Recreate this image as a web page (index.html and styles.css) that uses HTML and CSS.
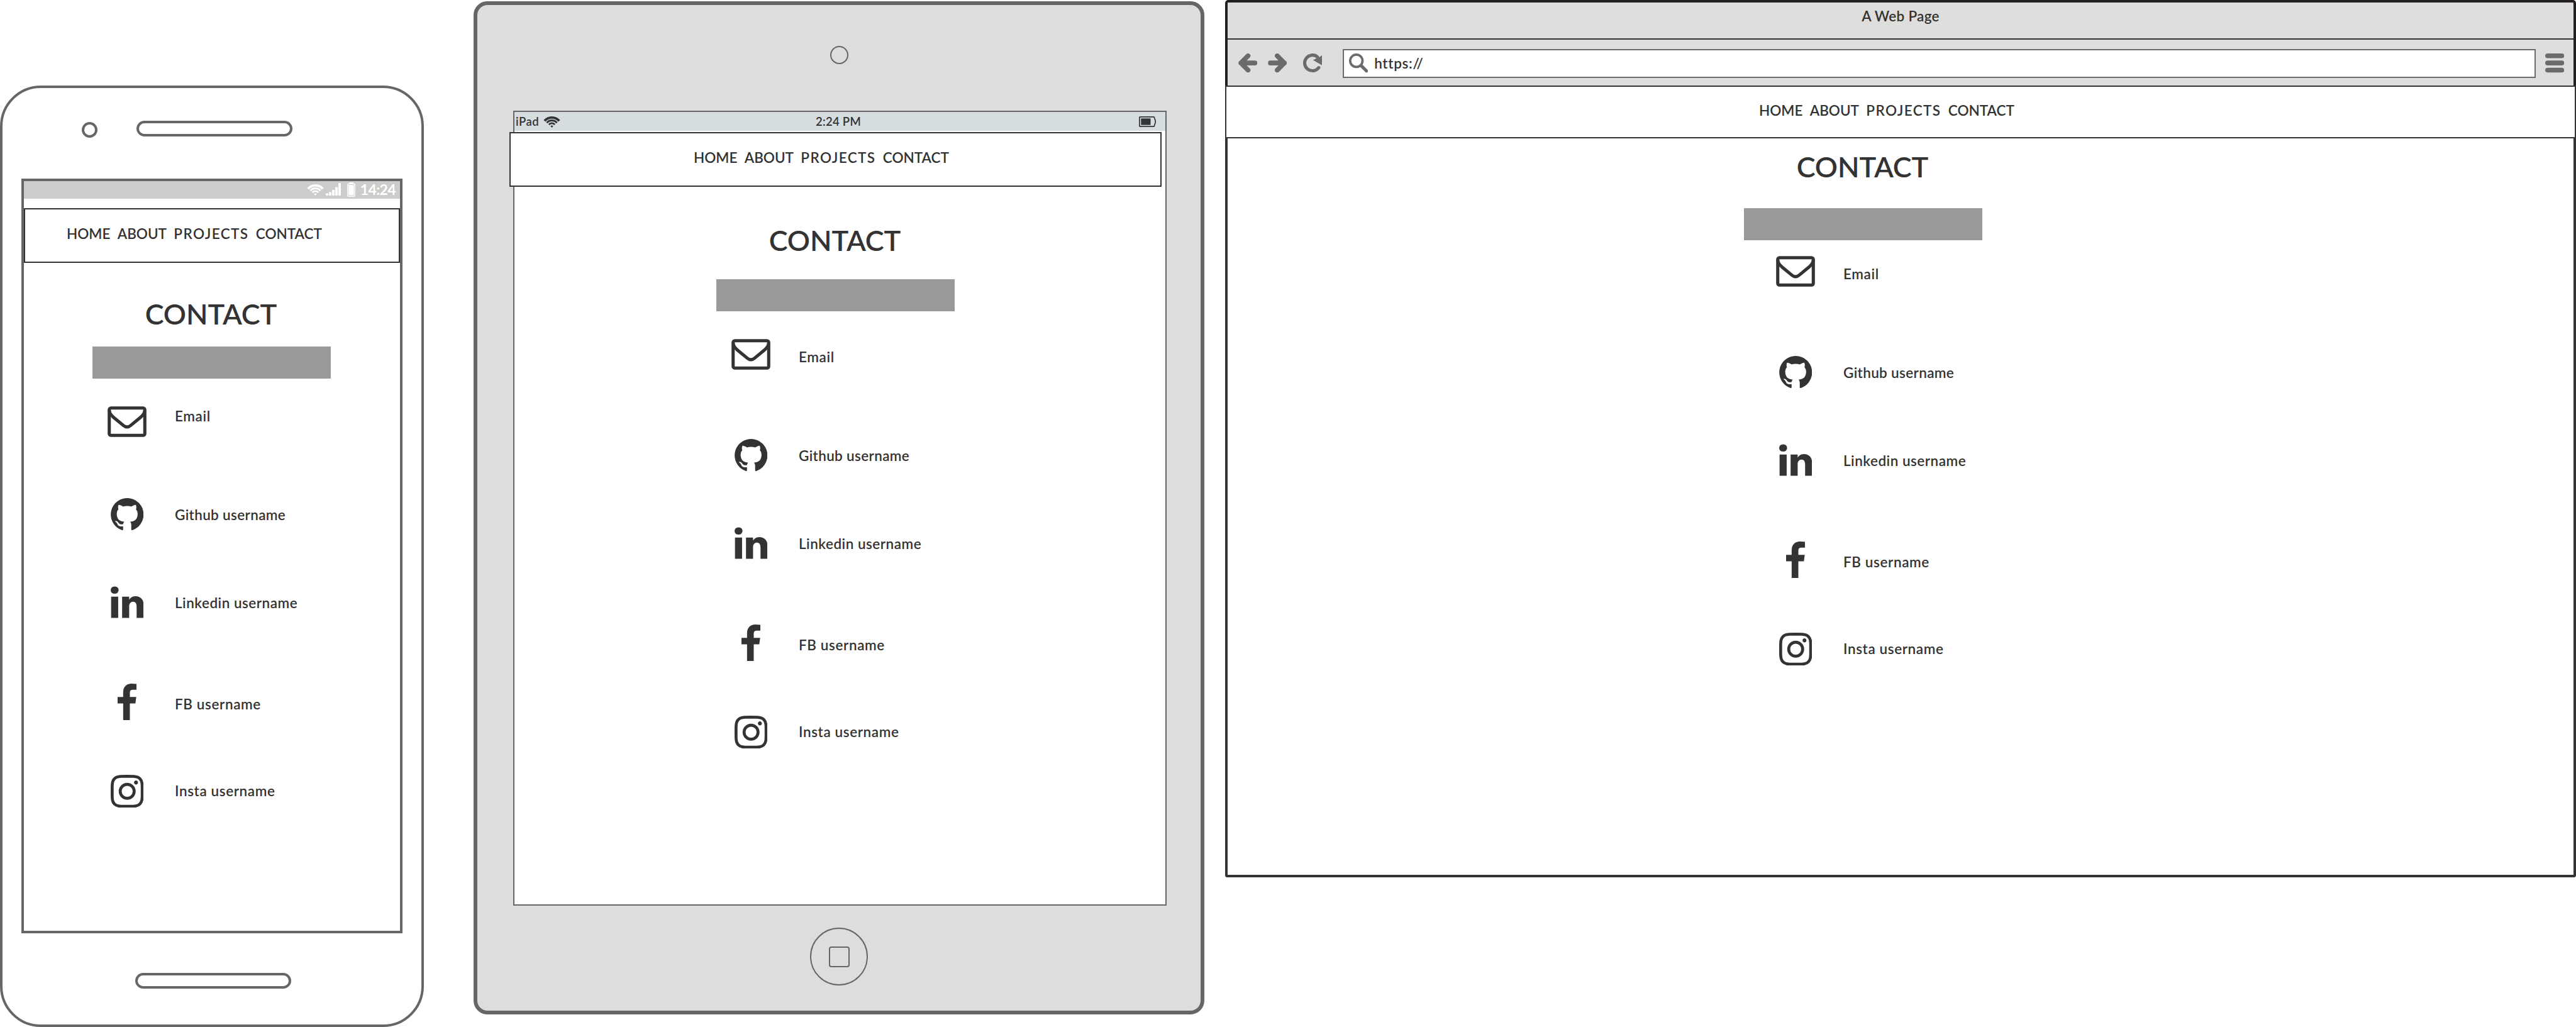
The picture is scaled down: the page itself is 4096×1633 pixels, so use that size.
FILE: index.html
```
<!DOCTYPE html>
<html lang="en">
<head>
<meta charset="utf-8">
<title>Contact page wireframes</title>
<link rel="stylesheet" href="styles.css">
</head>
<body>
<svg class="sprite" aria-hidden="true">
  <symbol id="mail" viewBox="0 0 66 52">
    <g fill="none" stroke="currentColor" stroke-width="5.4" stroke-linejoin="round">
      <rect x="2.9" y="2.9" width="60.2" height="46.2" rx="3"/>
      <path d="M3 7Q3.500 13 10 18.500L27 32.500Q33 37.500 39 32.500L56 18.500Q62.500 13 63 7"/>
    </g>
  </symbol>
  <symbol id="github" viewBox="128 128 1536 1500">
    <path fill="currentColor" d="M896 128q209 0 385.500 103t279.500 279.500 103 385.500q0 251-146.500 451.500t-378.500 277.500q-27 5-40-7t-13-30q0-3 .5-76.500t.5-134.500q0-97-52-142 57-6 102.500-18t94-39 81-66.500 53-105 20.500-150.500q0-119-79-206 37-91-8-204-28-9-81 11t-92 44l-38 24q-93-26-192-26t-192 26q-16-11-42.500-27t-83.500-38.500-85-13.500q-45 113-8 204-79 87-79 206 0 85 20.500 150t52.500 105 80.500 67 94 39 102.500 18q-39 36-49 103-21 10-45 15t-57 5-65.500-21.500-55.500-62.500q-19-32-48.500-52t-49.500-24l-20-3q-21 0-29 4.500t-5 11.500 9 14 13 12l7 5q22 10 43.500 38t31.500 51l10 23q13 38 44 61.500t67 30 69.500 7 55.500-3.500l23-4q0 38 .5 88.500t.5 54.500q0 18-13 30t-40 7q-232-77-378.500-277.500t-146.500-451.500q0-209 103-385.500t279.500-279.500 385.500-103z"/>
  </symbol>
  <symbol id="linkedin" viewBox="128 148 1536 1468">
    <path fill="currentColor" d="M477 625v991h-330v-991h330zm21-306q1 73-50.500 122t-135.500 49h-2q-82 0-132-49t-50-122q0-74 51.500-122.500t134.500-48.500 133 48.500 51 122.500zm1166 729v568h-329v-530q0-105-40.500-164.500t-126.500-59.500q-63 0-105.500 34.500t-63.500 85.500q-11 30-11 81v553h-329q2-399 2-647t-1-296l-1-48h329v144h-2q20-32 41-56t56.500-52 87-43.500 114.500-15.500q171 0 275 113.500t104 332.500z"/>
  </symbol>
  <symbol id="facebook" viewBox="479 0 864 1664">
    <path fill="currentColor" d="M1343 12v264h-157q-86 0-116 36t-30 108v189h293l-39 296h-254v759h-306v-759h-255v-296h255v-218q0-186 104-288.500t277-102.500q147 0 228 12z"/>
  </symbol>
  <symbol id="instagram" viewBox="128 128 1536 1536">
    <path fill="currentColor" d="M1152 896q0-106-75-181t-181-75-181 75-75 181 75 181 181 75 181-75 75-181zm138 0q0 164-115 279t-279 115-279-115-115-279 115-279 279-115 279 115 115 279zm108-410q0 38-27 65t-65 27-65-27-27-65 27-65 65-27 65 27 27 65zm-502-220q-7 0-76.500-.5t-105.500 0-96.500 3-103 10-71.500 18.500q-50 20-88 58t-58 88q-11 29-18.500 71.500t-10 103-3 96.500 0 105.500.5 76.500-.5 76.500 0 105.500 3 96.500 10 103 18.500 71.500q20 50 58 88t88 58q29 11 71.500 18.500t103 10 96.500 3 105.500 0 76.500-.5 76.500.5 105.500 0 96.500-3 103-10 71.500-18.500q50-20 88-58t58-88q11-29 18.500-71.500t10-103 3-96.500 0-105.500-.5-76.500.5-76.500 0-105.500-3-96.500-10-103-18.500-71.500q-20-50-58-88t-88-58q-29-11-71.500-18.500t-103-10-96.500-3-105.500 0-76.500.5zm768 630q0 229-5 317-10 208-124 322t-322 124q-88 5-317 5t-317-5q-208-10-322-124t-124-322q-5-88-5-317t5-317q10-208 124-322t322-124q88-5 317-5t317 5q208 10 322 124t124 322q5 88 5 317z"/>
  </symbol>
  <symbol id="wifi" viewBox="0 0 28 20">
    <g fill="none" stroke="currentColor">
      <path stroke-width="4" d="M1.700 8.700A16 16 0 0 1 26.300 8.700"/>
      <path stroke-width="3.200" d="M5.600 11.900A11 11 0 0 1 22.400 11.900"/>
      <path stroke-width="2.800" d="M9 14.800A6.600 6.600 0 0 1 19 14.800"/>
    </g>
    <path fill="currentColor" d="M11.700 17.400Q14 15.400 16.300 17.400L14 20z"/>
  </symbol>
  <symbol id="arrow" viewBox="0 0 96 96">
    <path fill="none" stroke="currentColor" stroke-width="24" stroke-linecap="round" stroke-linejoin="round" d="M49 12L13 48L49 84M13 48H84"/>
  </symbol>
</svg>

<main class="board">
  <section class="phone">
    <div class="phone-top"><i class="phone-camera"></i><i class="pill"></i></div>
    <div class="phone-screen">
      <div class="phone-status">
        <svg class="wifi"><use href="#wifi"/></svg>
        <svg class="signal" viewBox="0 0 24 20" fill="currentColor"><path d="M0 16.500h4V20H0zM5 14.500h4V20H5zM10 11h4v9h-4zM15 6.500h4V20h-4zM20 0h4v20h-4z"/></svg>
        <svg class="cell" viewBox="0 0 13 23"><rect x=".8" y="2.300" width="11.400" height="19.900" rx="1.500" fill="none" stroke="currentColor" stroke-width="1.400"/><path fill="currentColor" d="M3.500 0h6v2.500h-6zM2.300 4h8.400v16.500H2.300z"/></svg>
        <span class="clock">14:24</span>
      </div>
      <nav class="menu"><span>HOME</span><span>ABOUT</span><span class="wide">PROJECTS</span><span>CONTACT</span></nav>
      <div class="contact">
        <h1>CONTACT</h1>
        <div class="bar"></div>
        <ul>
          <li class="email"><b><svg><use href="#mail"/></svg></b><span>Email</span></li>
          <li class="gh"><b><svg><use href="#github"/></svg></b><span>Github username</span></li>
          <li class="li"><b><svg><use href="#linkedin"/></svg></b><span>Linkedin username</span></li>
          <li class="fb"><b><svg><use href="#facebook"/></svg></b><span>FB username</span></li>
          <li class="ig"><b><svg><use href="#instagram"/></svg></b><span>Insta username</span></li>
        </ul>
      </div>
    </div>
    <i class="pill pill-bottom"></i>
  </section>

  <section class="tablet">
    <i class="tablet-camera"></i>
    <div class="tablet-screen">
      <div class="tablet-status">
        <span class="carrier">iPad <svg class="wifi"><use href="#wifi"/></svg></span>
        <span>2:24 PM</span>
        <svg class="battery" viewBox="0 0 27 17"><path fill="none" stroke="currentColor" stroke-width="1.700" stroke-linejoin="round" d="M2 .9H23.500Q24.800 .9 24.800 4Q26.200 5 26.200 8.500Q26.200 12 24.800 13Q24.800 16.100 23.500 16.100H2Q.9 16.100 .9 15V2Q.9 .9 2 .9z"/><path fill="currentColor" d="M3.300 3.300h15.200v10.400H3.300z"/></svg>
      </div>
      <nav class="menu"><span>HOME</span><span>ABOUT</span><span class="wide">PROJECTS</span><span>CONTACT</span></nav>
      <div class="contact">
        <h1>CONTACT</h1>
        <div class="bar"></div>
        <ul>
          <li class="email"><b><svg><use href="#mail"/></svg></b><span>Email</span></li>
          <li class="gh"><b><svg><use href="#github"/></svg></b><span>Github username</span></li>
          <li class="li"><b><svg><use href="#linkedin"/></svg></b><span>Linkedin username</span></li>
          <li class="fb"><b><svg><use href="#facebook"/></svg></b><span>FB username</span></li>
          <li class="ig"><b><svg><use href="#instagram"/></svg></b><span>Insta username</span></li>
        </ul>
      </div>
    </div>
    <div class="home"><i></i></div>
  </section>

  <section class="browser">
    <header class="chrome">
      <div class="title">A Web Page</div>
      <div class="toolbar">
        <svg class="tool"><use href="#arrow"/></svg>
        <svg class="tool forward"><use href="#arrow"/></svg>
        <svg class="tool reload" viewBox="0 0 96 96"><path fill="none" stroke="currentColor" stroke-width="16" stroke-linecap="round" d="M79 71.500A39.500 39.500 0 1 1 72 17"/><path fill="currentColor" d="M96 8V60L50 33L64 26L74 14L84 18z"/></svg>
        <div class="address">
          <svg class="tool" viewBox="0 0 96 96" fill="none" stroke="currentColor" stroke-linecap="round"><circle cx="37" cy="37" r="31" stroke-width="12"/><path stroke-width="16" d="M63 63L88 88"/></svg>
          <span>https://</span>
        </div>
        <svg class="tool" viewBox="0 0 96 96" fill="currentColor"><rect width="96" height="24" rx="12"/><rect y="36" width="96" height="24" rx="12"/><rect y="72" width="96" height="24" rx="12"/></svg>
      </div>
    </header>
    <nav class="menu"><span>HOME</span><span>ABOUT</span><span class="wide">PROJECTS</span><span>CONTACT</span></nav>
    <div class="page">
      <div class="contact">
        <h1>CONTACT</h1>
        <div class="bar"></div>
        <ul>
          <li class="email"><b><svg><use href="#mail"/></svg></b><span>Email</span></li>
          <li class="gh"><b><svg><use href="#github"/></svg></b><span>Github username</span></li>
          <li class="li"><b><svg><use href="#linkedin"/></svg></b><span>Linkedin username</span></li>
          <li class="fb"><b><svg><use href="#facebook"/></svg></b><span>FB username</span></li>
          <li class="ig"><b><svg><use href="#instagram"/></svg></b><span>Insta username</span></li>
        </ul>
      </div>
    </div>
  </section>
</main>
</body>
</html>
```
FILE: styles.css
```
* { box-sizing: border-box; }
html, body { margin: 0; background: #fff; }
body {
  height: 1633px;
  overflow: hidden;
  font: 600 22.5px/30px Lato, "Open Sans", sans-serif;
  color: #333;
}
i { display: block; }
svg { display: block; flex: none; }
.sprite { position: absolute; width: 0; height: 0; }

.board { display: flex; align-items: flex-start; width: 4096px; }

/* Phone */
.phone {
  flex: none;
  width: 674px;
  height: 1497px;
  margin-top: 136px;
  border: 4px solid #666;
  border-radius: 65px;
}
.phone-top { display: flex; padding: 52px 0 0 126px; }
.phone-camera {
  width: 25px;
  height: 25px;
  margin: 2px 62px 0 0;
  border: 4px solid #666;
  border-radius: 50%;
}
.pill { width: 248px; height: 25px; border: 4px solid #666; border-radius: 12.5px; }
.pill-bottom { margin: 63px 0 0 211px; }
.phone-screen {
  width: 606px;
  height: 1200px;
  margin: 65px 0 0 30px;
  border: 4px solid #666;
}
.phone-status {
  display: flex;
  align-items: center;
  justify-content: flex-end;
  height: 28px;
  margin-bottom: 15px;
  padding: 0 7px 2px 0;
  background: #ccc;
  color: #fff;
}
.wifi { width: 27px; height: 19px; }
.signal { width: 24px; height: 20px; margin: 0 10px 0 3px; }
.cell { width: 13px; height: 23px; margin-right: 8px; }
.clock { font-size: 23px; font-weight: 700; letter-spacing: -.6px; }

/* Tablet */
.tablet {
  flex: none;
  width: 1162px;
  height: 1611px;
  margin: 2px 0 0 79px;
  border: 6px solid #666;
  border-radius: 22px;
  background: #ddd;
}
.tablet-camera {
  width: 29px;
  height: 29px;
  margin: 65px auto 74px;
  border: 2px solid #666;
  border-radius: 50%;
}
.tablet-screen {
  width: 1039px;
  height: 1264px;
  margin-left: 57px;
  border: 2px solid #666;
  background: #fff;
}
.tablet-status {
  display: grid;
  grid-template-columns: 1fr auto 1fr;
  align-items: center;
  height: 30px;
  margin-bottom: 2px;
  padding: 0 15px 2px 2px;
  background: #d6dde0;
  font-size: 18.5px;
  letter-spacing: .3px;
}
.tablet-status > span + span { padding-left: 8px; }
.carrier { display: flex; align-items: center; gap: 7px; letter-spacing: .5px; }
.battery { width: 27px; height: 17px; justify-self: end; }
.home {
  display: flex;
  align-items: center;
  justify-content: center;
  width: 92px;
  height: 92px;
  margin: 35px auto 0;
  border: 2px solid #666;
  border-radius: 50%;
}
.home i { width: 33px; height: 33px; border: 2px solid #666; border-radius: 4px; }

/* Browser window */
.browser { flex: none; width: 2148px; margin-left: 33px; }
.chrome {
  height: 136px;
  border: 4px solid #231f20;
  border-bottom: 0;
  border-radius: 5px 5px 0 0;
  background: #dededc;
}
.title {
  height: 59px;
  padding-top: 7px;
  border-bottom: 2px solid #333;
  text-align: center;
  letter-spacing: .3px;
}
.toolbar { display: flex; align-items: center; height: 75px; padding-left: 17px; color: #6b6b6b; }
.tool { width: 30.300px; height: 30.300px; }
.forward { margin-left: 17px; transform: scaleX(-1); }
.reload { margin-left: 25px; }
.address {
  display: flex;
  align-items: center;
  gap: 10px;
  width: 1897px;
  height: 46px;
  margin: 0 15px 0 33px;
  padding-left: 8px;
  border: 2px solid #6b6b6b;
  background: #fff;
}
.address span { padding-top: 1px; color: #333; letter-spacing: .7px; }
.page {
  height: 1175px;
  border: 4px solid #333;
  border-top: 0;
  border-radius: 0 0 4px 4px;
}

/* Site menu */
.menu {
  display: flex;
  align-items: center;
  gap: 11.300px;
  height: 87px;
  padding-bottom: 5px;
  border: 2px solid #333;
  background: #fff;
}
.menu .wide { letter-spacing: 1.400px; }
.phone .menu { padding-left: 66px; }
.tablet .menu { width: 1037px; margin-left: -8px; padding-left: 291px; }
.browser .menu { height: 84px; padding-left: 847px; }

/* Contact block */
.contact { width: 379px; }
.phone .contact { margin: 54px 0 0 109px; }
.tablet .contact { margin: 58px 0 0 321px; }
.browser .contact { padding-top: 18px; margin-left: 821px; }
h1 {
  margin: 0 0 35px;
  padding-right: 2px;
  font: 600 45px/54px Lato, "Open Sans", sans-serif;
  letter-spacing: -.1px;
  text-align: center;
}
.phone h1 { margin-bottom: 25px; }
.browser h1 { margin-bottom: 39px; }
.bar { height: 51px; background: #999; }
ul { margin: 38px 0 0 24px; padding: 0; list-style: none; }
.browser ul { margin: 19px 0 0 51px; }
li { display: flex; align-items: center; gap: 45px; height: 60px; letter-spacing: .6px; }
b { display: flex; justify-content: center; width: 62px; }
.email svg { width: 62px; height: 49px; }
.gh svg, .li svg { width: 52.500px; height: 51px; }
.fb svg { width: 30px; height: 58px; }
.ig svg { width: 52.500px; height: 52.500px; }

.gh { margin-top: 100px; letter-spacing: .35px; }
.phone .gh { margin-top: 87px; }
.li { margin-top: 80px; letter-spacing: .5px; }
.fb { margin-top: 99px; }
.ig { margin-top: 82px; }
.email span { margin-top: 9px; }
.phone .email span { margin: 0 0 17px; }
.gh span, .li span { margin-top: 3px; }
.fb span { margin-top: 8px; }
.ig span { margin-bottom: 1px; }
```
